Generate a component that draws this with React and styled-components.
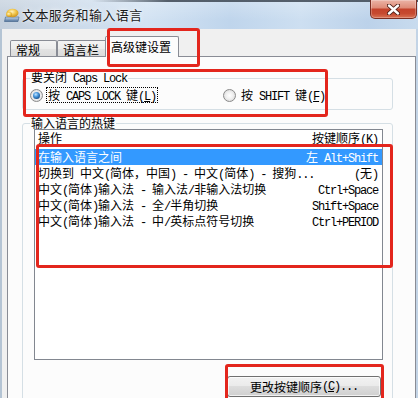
import React from "react";
import styled, { createGlobalStyle } from "styled-components";

const Global = createGlobalStyle`
  html, body { margin: 0; padding: 0; background: #ffffff; }
  body { font-family: "Noto Sans CJK SC", sans-serif; font-size: 12px; color: #000; }
  * { box-sizing: border-box; }
`;

const Window = styled.div`
  position: relative;
  width: 418px;
  height: 398px;
  overflow: hidden;
  display: flex;
  flex-direction: column;
  background: linear-gradient(90deg, #b4c4d4, #c3d4e6);
`;

const TitleBar = styled.div`
  flex: none;
  height: 29px;
  display: flex;
  align-items: flex-start;
  background:
    linear-gradient(90deg, rgba(70,80,92,0) 22%, rgba(70,80,92,0.9) 40%, rgba(70,80,92,0.9) 100%) top / 100% 2px no-repeat,
    linear-gradient(180deg, rgba(255,255,255,0.25), rgba(255,255,255,0) 70%),
    linear-gradient(90deg, #c3cfdc 0%, #cbdaea 18%, #d3e3f3 35%, #bfd5ec 55%, #cddff1 72%, #bcd2ea 88%, #c8dbee 100%);
`;

const AppIcon = styled.svg`
  flex: none;
  margin: 7px 0 0 4px;
`;

const Title = styled.div`
  margin: 6px 0 0 2px;
  font-size: 13px;
  line-height: 18px;
  letter-spacing: 0.4px;
  color: #1a1a1a;
  text-shadow: 0 0 6px rgba(255,255,255,0.95), 0 0 2px rgba(255,255,255,0.9);
`;

const CloseBtn = styled.div`
  margin: 0 1px 0 auto;
  width: 47px;
  height: 19px;
  border: 1px solid #7a2e22;
  border-top: none;
  border-radius: 0 0 5px 5px;
  background: linear-gradient(180deg, #ebb4a6 0%, #df8d79 42%, #c4432b 52%, #c64a30 75%, #d97354 100%);
  box-shadow: inset 0 0 0 1px rgba(255,255,255,0.25);
  display: flex;
  align-items: center;
  justify-content: center;
`;

const Client = styled.div`
  flex: 1;
  margin: 0 2px;
  padding-left: 5px;
  background: #f0f0f0;
  display: flex;
  flex-direction: column;
`;

const TabStrip = styled.div`
  flex: none;
  height: 27px;
  display: flex;
  align-items: flex-end;
  padding-left: 3px;
  position: relative;
  z-index: 1;
`;

const Tab = styled.div`
  flex: none;
  width: ${p => p.$w}px;
  height: ${p => (p.$active ? 21 : 16)}px;
  margin-left: ${p => (p.$active ? -2 : 0)}px;
  margin-bottom: ${p => (p.$active ? -1 : 0)}px;
  padding: ${p => (p.$active ? "3px 0 0 5px" : "2px 0 0 5px")};
  border: 1px solid #898c95;
  border-bottom: none;
  border-radius: 2px 2px 0 0;
  background: ${p =>
    p.$active
      ? "#fcfcfc"
      : "linear-gradient(180deg, #f3f3f3 0%, #ececec 50%, #e3e3e3 51%, #dcdcdc 100%)"};
  line-height: 14px;
  font-size: 12px;
  white-space: nowrap;
  position: relative;
  z-index: ${p => (p.$active ? 2 : 0)};
`;

const TabPage = styled.div`
  flex: 1;
  border: 1px solid #898c95;
  background: #fcfcfc;
  padding-left: 14px;
  display: flex;
  flex-direction: column;
`;

const Group = styled.fieldset`
  flex: none;
  width: 371px;
  min-width: 0;
  margin: ${p => p.$top}px 0 0 0;
  padding: 0 0 6px 7px;
  border: 1px solid #d5dfe5;
  border-radius: 3px;
`;

const Legend = styled.legend`
  padding: 0 1px;
  margin: 0;
  font-size: 12px;
  line-height: 12px;
  color: #000;
`;

const RadioRow = styled.div`
  display: grid;
  grid-template-columns: 193px auto;
  padding-top: 2px;
  height: 18px;
`;

const Option = styled.div`
  display: flex;
  align-items: center;
  height: 16px;
`;

const Radio = styled.span`
  flex: none;
  position: relative;
  width: 13px;
  height: 13px;
  border-radius: 50%;
  border: 1px solid #8a8a8a;
  background: radial-gradient(circle at 50% 50%, #ffffff 0%, #f0f0f0 45%, #cfcfcf 100%);
  &::after {
    content: "";
    display: ${p => (p.$on ? "block" : "none")};
    position: absolute;
    left: 2px;
    top: 2px;
    width: 7px;
    height: 7px;
    border-radius: 50%;
    background: radial-gradient(circle at 40% 35%, #c7e6ff 0%, #4e9ce0 35%, #17528f 75%, #0f3d6e 100%);
  }
`;

const OptLabel = styled.span`
  margin-left: 3px;
  height: 16px;
  padding: 0 1px;
  border: 1px dotted ${p => (p.$focus ? "#000" : "transparent")};
  line-height: 14px;
  white-space: nowrap;
`;

const ListCol = styled.div`
  margin-left: 4px;
  display: flex;
  flex-direction: column;
  width: 349px;
`;

const ListView = styled.div`
  width: 349px;
  height: 231px;
  border: 1px solid #828790;
  background: #ffffff;
  display: flex;
  flex-direction: column;
`;

const Header = styled.div`
  flex: none;
  height: 19px;
  padding: 1px 4px 0 3px;
  display: flex;
  justify-content: space-between;
  line-height: 14px;
  white-space: nowrap;
`;

const Row = styled.div`
  flex: none;
  height: 16px;
  padding: 0 4px 0 3px;
  display: flex;
  justify-content: space-between;
  line-height: 16px;
  white-space: nowrap;
  background: ${p => (p.$sel ? "#3399ff" : "transparent")};
  color: ${p => (p.$sel ? "#ffffff" : "#000000")};
`;

const Button = styled.div`
  align-self: flex-end;
  margin: 16px 2px 0 0;
  width: 154px;
  height: 21px;
  border: 1px solid #707070;
  border-radius: 3px;
  background: linear-gradient(180deg, #f2f2f2 0%, #ebebeb 45%, #dddddd 50%, #cfcfcf 100%);
  box-shadow: inset 0 0 0 1px rgba(255,255,255,0.7);
  display: flex;
  align-items: center;
  justify-content: center;
  line-height: 16px;
  white-space: nowrap;
`;

const Lat = styled.span`
  font-family: "Liberation Mono", monospace;
  font-size: 12px;
  letter-spacing: -1.2px;
`;

const Mark = styled.div`
  position: absolute;
  left: ${p => p.$x}px;
  top: ${p => p.$y}px;
  width: ${p => p.$w}px;
  height: ${p => p.$h}px;
  border: 3px solid #e3261d;
  border-radius: 3px;
  pointer-events: none;
  z-index: 5;
`;

function Txt({ children }) {
  const parts = String(children).split(/([\x00-\x7F]+)/).filter(Boolean);
  return (
    <>
      {parts.map((p, i) =>
        /^[\x00-\x7F]+$/.test(p) ? <Lat key={i}>{p}</Lat> : <React.Fragment key={i}>{p}</React.Fragment>
      )}
    </>
  );
}

function AK({ k, tail = "" }) {
  return (
    <Lat>
      (<u>{k}</u>){tail}
    </Lat>
  );
}

const rows = [
  { a: "在输入语言之间", b: "左 Alt+Shift", sel: true },
  { a: "切换到 中文(简体，中国) - 中文(简体) - 搜狗...", b: "(无)" },
  { a: "中文(简体)输入法 - 输入法/非输入法切换", b: "Ctrl+Space" },
  { a: "中文(简体)输入法 - 全/半角切换", b: "Shift+Space" },
  { a: "中文(简体)输入法 - 中/英标点符号切换", b: "Ctrl+PERIOD" },
];

export default function App() {
  return (
    <>
      <Global />
      <Window>
        <TitleBar>
          <AppIcon width="16" height="16" viewBox="0 0 16 16">
            <defs>
              <radialGradient id="gold" cx="45%" cy="35%" r="70%">
                <stop offset="0%" stopColor="#fff3c2" />
                <stop offset="45%" stopColor="#f2c84e" />
                <stop offset="100%" stopColor="#c48a17" />
              </radialGradient>
              <linearGradient id="kb" x1="0" y1="0" x2="0" y2="1">
                <stop offset="0%" stopColor="#c9d9ea" />
                <stop offset="100%" stopColor="#4f739c" />
              </linearGradient>
            </defs>
            <polygon points="1.5,10 15,10 14,14.5 0.5,14.5" fill="url(#kb)" stroke="#3e5f86" strokeWidth="0.6" />
            <ellipse cx="8.5" cy="6" rx="6" ry="4.2" fill="url(#gold)" />
            <ellipse cx="5" cy="7.5" rx="3" ry="2.4" fill="url(#gold)" />
          </AppIcon>
          <Title>文本服务和输入语言</Title>
          <CloseBtn>
            <svg width="13" height="11" viewBox="0 0 13 11">
              <path d="M2 1.5 L11 9.5 M11 1.5 L2 9.5" stroke="#4a1c14" strokeWidth="4.2" strokeLinecap="round" />
              <path d="M2 1.5 L11 9.5 M11 1.5 L2 9.5" stroke="#ffffff" strokeWidth="2.4" strokeLinecap="round" />
            </svg>
          </CloseBtn>
        </TitleBar>
        <Client>
          <TabStrip>
            <Tab $w={47}>常规</Tab>
            <Tab $w={50}>语言栏</Tab>
            <Tab $w={74} $active>高级键设置</Tab>
          </TabStrip>
          <TabPage>
            <Group $top={14}>
              <Legend>
                <Txt>要关闭 Caps Lock</Txt>
              </Legend>
              <RadioRow>
                <Option>
                  <Radio $on />
                  <OptLabel $focus>
                    <Txt>按 CAPS LOCK 键</Txt>
                    <AK k="L" />
                  </OptLabel>
                </Option>
                <Option>
                  <Radio />
                  <OptLabel>
                    <Txt>按 SHIFT 键</Txt>
                    <AK k="F" />
                  </OptLabel>
                </Option>
              </RadioRow>
            </Group>
            <Group $top={7}>
              <Legend>输入语言的热键</Legend>
              <ListCol>
                <ListView>
                  <Header>
                    <span>操作</span>
                    <span>
                      按键顺序<AK k="K" />
                    </span>
                  </Header>
                  {rows.map((r, i) => (
                    <Row key={i} $sel={r.sel}>
                      <span>
                        <Txt>{r.a}</Txt>
                      </span>
                      <span>
                        <Txt>{r.b}</Txt>
                      </span>
                    </Row>
                  ))}
                </ListView>
                <Button>
                  更改按键顺序<AK k="C" tail="..." />
                </Button>
              </ListCol>
            </Group>
          </TabPage>
        </Client>
        <Mark $x={107} $y={28} $w={93} $h={39} />
        <Mark $x={23} $y={69} $w={305} $h={48} />
        <Mark $x={36} $y={144} $w={357} $h={124} />
        <Mark $x={225} $y={364} $w={159} $h={44} />
      </Window>
    </>
  );
}
